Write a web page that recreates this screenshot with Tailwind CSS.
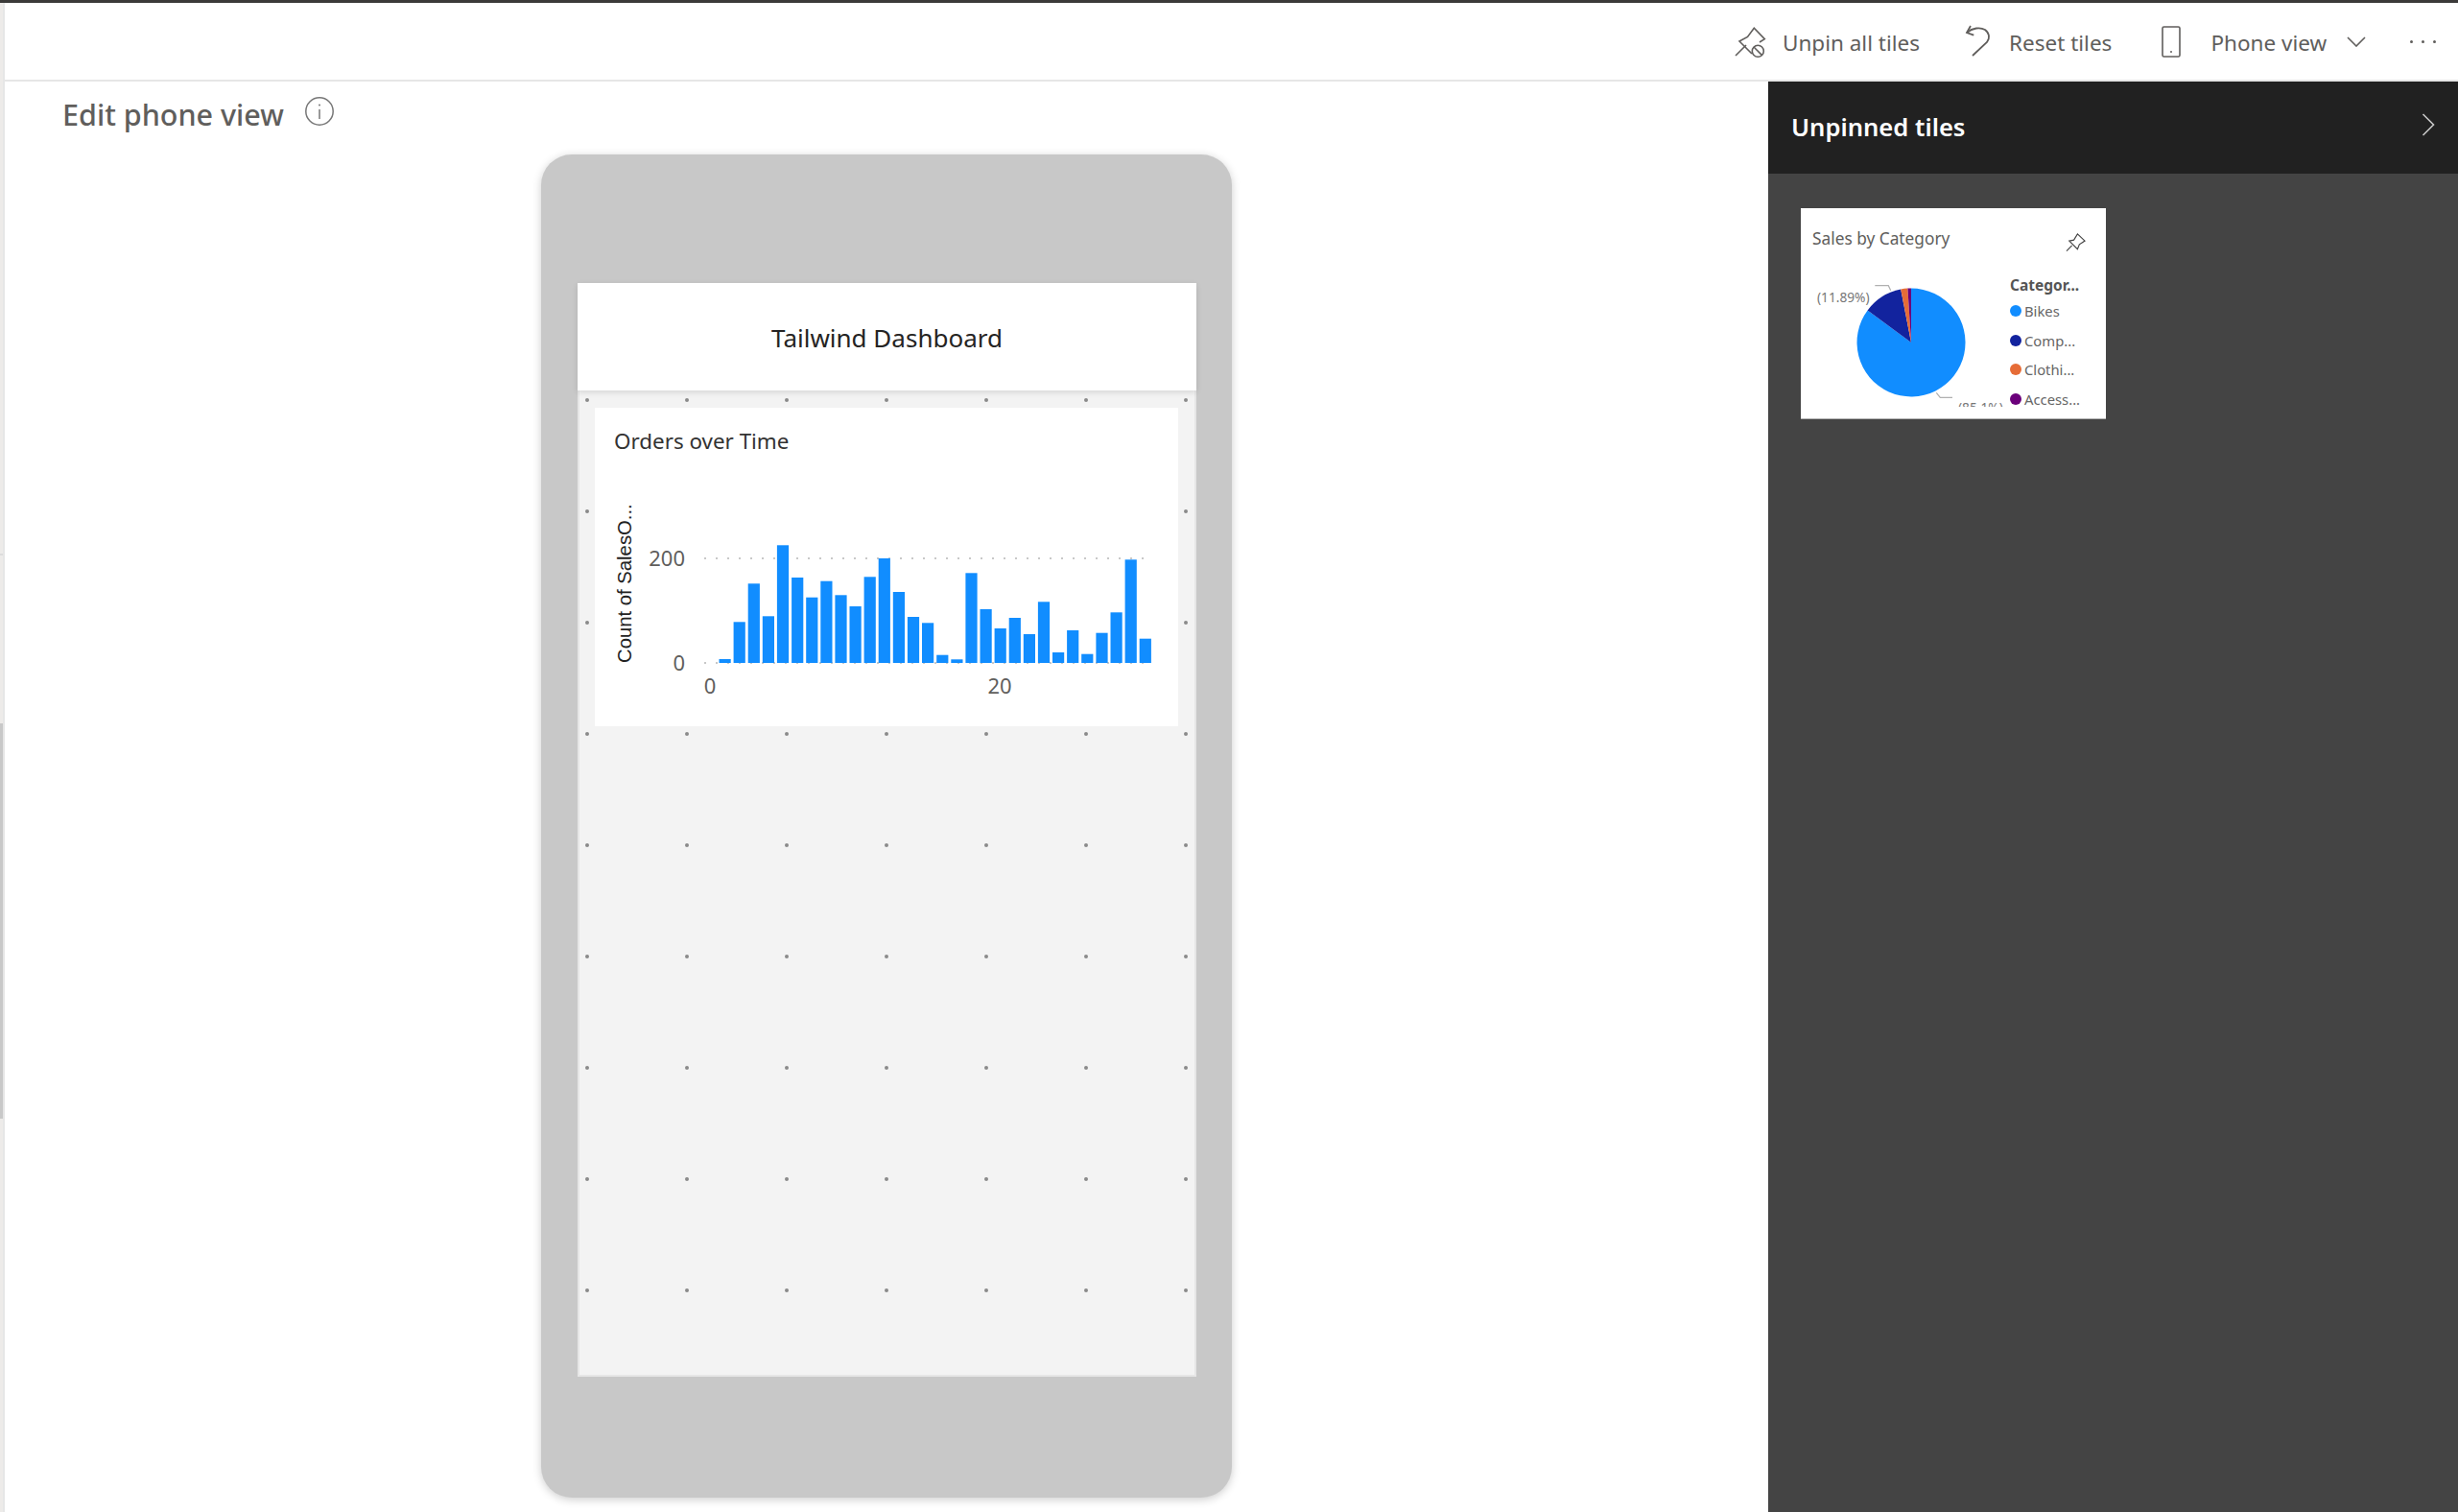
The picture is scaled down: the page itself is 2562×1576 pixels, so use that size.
<!DOCTYPE html>
<html lang="en">
<head>
    <meta charset="UTF-8">
    <meta name="viewport" content="width=device-width, initial-scale=1.0">
    <script src="https://cdn.jsdelivr.net/npm/@tailwindcss/browser@4"></script>
    <title>Edit phone view</title>
</head>
<body class="bg-white font-['Noto_Sans',sans-serif] overflow-hidden">
<div class="w-[2562px] h-[1576px] flex flex-col overflow-hidden border-t-[3px] border-[#3b3a39]">
    <div class="flex-1 flex min-h-0">
        <!-- left edge with scroll thumb -->
        <div class="w-[5px] shrink-0 flex border-r-2 border-[#e6e6e6] bg-[#edebe9]">
            <div class="w-[3px] flex flex-col">
                <div class="mt-[574px] h-[2px] bg-[#dcdcdc]"></div>
                <div class="mt-[175px] h-[412px] bg-[#c8c8c8]"></div>
            </div>
        </div>

        <div class="flex-1 flex flex-col min-w-0">
            <!-- toolbar -->
            <div class="h-[82px] shrink-0 border-b-2 border-[#e6e6e6] flex items-center text-[#605e5c] text-[22.5px]">
                <svg class="ml-[1803px] mt-[2px]" width="34" height="34" viewBox="0 0 34 34" fill="none" stroke="#605e5c" stroke-width="1.6">
                    <path d="M1 31 L12 20"/>
                    <path d="M18 29 L5 16 L13.5 11.5 L20.3 2.3 L31.3 13.7 L26 17"/>
                    <circle cx="24.3" cy="26.3" r="6"/>
                    <path d="M20 22 L28.6 30.6"/>
                </svg>
                <span class="ml-[16px] mt-[4px]">Unpin all tiles</span>
                <svg class="ml-[38px] mt-[4px]" width="50" height="50" viewBox="0 0 50 50" fill="none" stroke="#605e5c" stroke-width="1.8">
                    <path d="M15 7 L11 14 L18.3 16.7"/>
                    <path d="M11 14 C17 9 25 8 30 11 C35 15 35 20 32 24 L17 38"/>
                </svg>
                <span class="ml-[5px] mt-[4px]">Reset tiles</span>
                <svg class="ml-[52px]" width="20" height="33" viewBox="0 0 20 33" fill="none" stroke="#605e5c" stroke-width="1.6">
                    <rect x="1" y="1" width="18" height="31" rx="1.5"/>
                    <circle cx="10" cy="27" r="1" fill="#605e5c" stroke="none"/>
                </svg>
                <span class="ml-[31px] mt-[4px]">Phone view</span>
                <svg class="ml-[21px]" width="20" height="11" viewBox="0 0 20 11" fill="none" stroke="#605e5c" stroke-width="1.6">
                    <path d="M1 1 L10 10 L19 1"/>
                </svg>
                <div class="ml-[46px] flex gap-[9px]">
                    <span class="w-[3px] h-[3px] rounded-full bg-[#605e5c]"></span>
                    <span class="w-[3px] h-[3px] rounded-full bg-[#605e5c]"></span>
                    <span class="w-[3px] h-[3px] rounded-full bg-[#605e5c]"></span>
                </div>
            </div>

            <div class="flex-1 flex min-h-0">
                <div class="w-[1838px] shrink-0">
                    <!-- heading -->
                    <div class="h-[76px] pl-[60px] flex items-start text-[#605e5c]">
                        <h1 class="text-[30.5px] leading-[40px] mt-[14px] font-medium">Edit phone view</h1>
                        <svg class="ml-[21px] mt-[15px]" width="32" height="32" viewBox="0 0 32 32" fill="none" stroke="#777" stroke-width="1.5">
                            <circle cx="16" cy="16" r="14.2"/>
                            <path d="M16 14 V24"/>
                            <circle cx="16" cy="9.5" r="1" fill="#777" stroke="none"/>
                        </svg>
                    </div>

                    <!-- phone -->
                    <div class="ml-[559px] w-[720px] h-[1400px] rounded-[32px] bg-[#c8c8c8] shadow-[0_2px_10px_rgba(0,0,0,0.2)] pt-[134px] pl-[38px]">
                        <div class="w-[645px] h-[1140px] flex flex-col">
                            <div class="h-[112px] shrink-0 bg-white shadow-[0_2px_6px_rgba(0,0,0,0.12)] z-10 pt-[2px] flex items-center justify-center text-[26px] text-[#252423]">Tailwind Dashboard</div>
                            <div class="relative flex-1 bg-[#f3f3f3] border-x-2 border-b-2 border-[#e6e6e6]">
                                <svg class="absolute inset-0" width="641" height="1026">
                                    <defs>
                                        <pattern id="dots" patternUnits="userSpaceOnUse" width="104" height="116">
                                            <circle cx="8" cy="10" r="2" fill="#8a8a8a"/>
                                        </pattern>
                                    </defs>
                                    <rect width="641" height="1026" fill="url(#dots)"/>
                                </svg>
                                <!-- chart card -->
                                <div class="relative ml-[16px] mt-[18px] w-[608px] h-[332px] bg-white">
                                    <div class="pl-[20px] pt-[22px] text-[22.4px] leading-[26px] text-[#333]">Orders over Time</div>
                                    <svg class="block" width="608" height="284" viewBox="0 0 608 284">
                                        <g stroke="#c8c8c8" stroke-width="2" stroke-dasharray="2 10">
                                            <path d="M114 109 H572"/>
                                            <path d="M114 218 H572"/>
                                        </g>
                                        <g fill="#118dff">
                                            <rect x="129.5" y="214" width="12.2" height="4"/>
                                            <rect x="144.6" y="175.3" width="12.2" height="42.7"/>
                                            <rect x="159.7" y="135.3" width="12.2" height="82.7"/>
                                            <rect x="174.8" y="169.3" width="12.2" height="48.7"/>
                                            <rect x="189.9" y="95.3" width="12.2" height="122.7"/>
                                            <rect x="205.1" y="129" width="12.2" height="89"/>
                                            <rect x="220.2" y="149.7" width="12.2" height="68.3"/>
                                            <rect x="235.3" y="132.7" width="12.2" height="85.3"/>
                                            <rect x="250.4" y="147.3" width="12.2" height="70.7"/>
                                            <rect x="265.5" y="159" width="12.2" height="59"/>
                                            <rect x="280.6" y="128.3" width="12.2" height="89.7"/>
                                            <rect x="295.7" y="109" width="12.2" height="109"/>
                                            <rect x="310.8" y="144" width="12.2" height="74"/>
                                            <rect x="325.9" y="170" width="12.2" height="48"/>
                                            <rect x="341" y="176.3" width="12.2" height="41.7"/>
                                            <rect x="356.2" y="209.7" width="12.2" height="8.3"/>
                                            <rect x="371.3" y="214.3" width="12.2" height="3.7"/>
                                            <rect x="386.4" y="124.3" width="12.2" height="93.7"/>
                                            <rect x="401.5" y="162" width="12.2" height="56"/>
                                            <rect x="416.6" y="182" width="12.2" height="36"/>
                                            <rect x="431.7" y="171" width="12.2" height="47"/>
                                            <rect x="446.8" y="188" width="12.2" height="30"/>
                                            <rect x="461.9" y="154.3" width="12.2" height="63.7"/>
                                            <rect x="477" y="207" width="12.2" height="11"/>
                                            <rect x="492.1" y="184" width="12.2" height="34"/>
                                            <rect x="507.2" y="208.7" width="12.2" height="9.3"/>
                                            <rect x="522.4" y="186.7" width="12.2" height="31.3"/>
                                            <rect x="537.5" y="165.3" width="12.2" height="52.7"/>
                                            <rect x="552.6" y="110.3" width="12.2" height="107.7"/>
                                            <rect x="567.7" y="192.7" width="12.2" height="25.3"/>
                                        </g>
                                        <g fill="#605e5c" font-size="22">
                                            <text x="94" y="117" text-anchor="end">200</text>
                                            <text x="94" y="226" text-anchor="end">0</text>
                                            <text x="120" y="250" text-anchor="middle">0</text>
                                            <text x="422" y="250" text-anchor="middle">20</text>
                                        </g>
                                        <text transform="translate(38 218) rotate(-90)" font-family="Liberation Sans" font-size="20.3" fill="#222">Count of SalesO...</text>
                                    </svg>
                                </div>
                            </div>
                        </div>
                    </div>
                </div>

                <!-- unpinned tiles panel -->
                <div class="flex-1 flex flex-col bg-[#444444] min-w-0">
                    <div class="h-[96px] shrink-0 bg-[#212121] flex items-center justify-between pl-[24px] pr-[24px]">
                        <h2 class="text-white text-[25.6px] font-semibold">Unpinned tiles</h2>
                        <svg class="-mt-[6px]" width="14" height="24" viewBox="0 0 14 24" fill="none" stroke="#c8c8c8" stroke-width="1.6">
                            <path d="M1.5 1 L12.5 12 L1.5 23"/>
                        </svg>
                    </div>
                    <div class="pl-[34px] pt-[36px]">
                        <div class="w-[318px] h-[220px] bg-white border-b border-[#b3b3b3] flex flex-col overflow-hidden">
                            <div class="h-[50px] shrink-0 pl-[12px] pr-[21px] flex justify-between">
                                <span class="text-[17.3px] leading-[22px] mt-[21px] text-[#605e5c]">Sales by Category</span>
                                <svg class="mt-[25px]" width="21" height="21" viewBox="8 6 22 21" fill="none" stroke="#444" stroke-width="1.2">
                                    <path d="M9 26 L15 20"/>
                                    <path d="M12 15 L17 14 L21 7.5 L29 15 L23 19 L21 24 Z"/>
                                </svg>
                            </div>
                            <div class="flex">
                                <svg class="shrink-0" width="218" height="157" viewBox="0 0 218 157">
                                    <path d="M115 90 L115 33.5 A56.5 56.5 0 1 1 69.6 56.4 Z" fill="#118dff"/>
                                    <path d="M115 90 L69.6 56.4 A56.5 56.5 0 0 1 104.2 34.5 Z" fill="#12239e"/>
                                    <path d="M115 90 L104.2 34.5 A56.5 56.5 0 0 1 111.4 33.6 Z" fill="#e66c37"/>
                                    <path d="M115 90 L111.4 33.6 A56.5 56.5 0 0 1 115 33.5 Z" fill="#6b007b"/>
                                    <g fill="none" stroke="#b0b0b0" stroke-width="1.2">
                                        <path d="M77.3 30.7 H91.3 L93.7 35.7"/>
                                        <path d="M141.3 142.3 L145.3 147.3 H158"/>
                                    </g>
                                    <g fill="#777" font-size="13.7">
                                        <text x="17" y="48">(11.89%)</text>
                                        <text x="164" y="163">(85.1%)</text>
                                    </g>
                                </svg>
                                <div class="flex flex-col text-[14.8px] text-[#666]">
                                    <div class="mt-[20px] h-[21.67px] leading-[20px] text-[15.5px] font-bold text-[#555] whitespace-nowrap">Categor...</div>
                                    <div class="h-[30.67px] flex items-center gap-[3px]"><span class="w-3 h-3 rounded-full bg-[#118dff]"></span>Bikes</div>
                                    <div class="h-[30.67px] flex items-center gap-[3px]"><span class="w-3 h-3 rounded-full bg-[#12239e]"></span>Comp...</div>
                                    <div class="h-[30.67px] flex items-center gap-[3px]"><span class="w-3 h-3 rounded-full bg-[#e66c37]"></span>Clothi...</div>
                                    <div class="h-[30.67px] flex items-center gap-[3px]"><span class="w-3 h-3 rounded-full bg-[#6b007b]"></span>Access...</div>
                                </div>
                            </div>
                        </div>
                    </div>
                </div>
            </div>
        </div>
    </div>
</div>
</body>
</html>
